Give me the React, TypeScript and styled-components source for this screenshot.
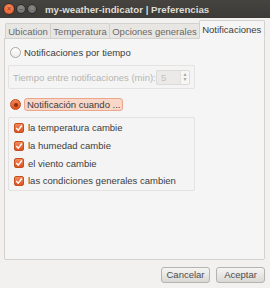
import { createGlobalStyle, styled } from "styled-components";

const GlobalStyle = createGlobalStyle`
  html, body {
    margin: 0;
    padding: 0;
    background: #f2f1f0;
  }
  body {
    font-family: "Liberation Sans", "DejaVu Sans", sans-serif;
    font-size: 9.5px;
    color: #3c3c3c;
  }
`;

const checks = [
  "la temperatura cambie",
  "la humedad cambie",
  "el viento cambie",
  "las condiciones generales cambien",
];

const tabs = ["Ubication", "Temperatura", "Opciones generales", "Notificaciones"];

function CheckMark() {
  return (
    <svg width="8" height="8" viewBox="0 0 8 8">
      <path d="M1.2 4.1 L3.2 6.2 L6.9 1.5" stroke="#fff" strokeWidth="1.4" fill="none" />
    </svg>
  );
}

export default function App() {
  return (
    <Window>
      <GlobalStyle />
      <TitleBar>
        <WinButtons>
          <WinButton $close>×</WinButton>
          <WinButton>–</WinButton>
          <WinButton>□</WinButton>
        </WinButtons>
        <Title>my-weather-indicator | Preferencias</Title>
      </TitleBar>
      <Body>
        <Notebook>
          <TabRow>
            {tabs.map((t, i) => (
              <Tab key={t} $active={i === tabs.length - 1}>
                {t}
              </Tab>
            ))}
          </TabRow>
          <Page>
            <RadioRow>
              <Radio />
              <span>Notificaciones por tiempo</span>
            </RadioRow>
            <Frame>
              <SpinLine>
                <DimLabel>Tiempo entre notificaciones (min):</DimLabel>
                <Spin>
                  <SpinValue>5</SpinValue>
                  <SpinArrows>
                    <span>▴</span>
                    <span>▾</span>
                  </SpinArrows>
                </Spin>
              </SpinLine>
            </Frame>
            <RadioRow $gapTop>
              <Radio $checked />
              <Focused>Notificación cuando ...</Focused>
            </RadioRow>
            <Frame>
              <CheckList>
                {checks.map((c) => (
                  <CheckRow key={c}>
                    <Check>
                      <CheckMark />
                    </Check>
                    <span>{c}</span>
                  </CheckRow>
                ))}
              </CheckList>
            </Frame>
          </Page>
        </Notebook>
        <ButtonRow>
          <Button>Cancelar</Button>
          <Button>Aceptar</Button>
        </ButtonRow>
      </Body>
    </Window>
  );
}

const Window = styled.div`
  width: 270px;
  height: 288px;
  display: flex;
  flex-direction: column;
  background: #f2f1f0;
  overflow: hidden;
`;

const TitleBar = styled.div`
  height: 18px;
  flex-shrink: 0;
  display: flex;
  align-items: center;
  background: linear-gradient(#45443f, #3c3b37);
  padding-left: 3px;
  gap: 8px;
`;

const WinButtons = styled.div`
  display: flex;
  align-items: center;
  gap: 1px;
`;

const WinButton = styled.div<{ $close?: boolean }>`
  width: ${(p) => (p.$close ? "12px" : "10px")};
  height: ${(p) => (p.$close ? "12px" : "10px")};
  border-radius: 50%;
  box-sizing: border-box;
  font-size: 7px;
  font-weight: bold;
  line-height: ${(p) => (p.$close ? "10px" : "8px")};
  text-align: center;
  color: ${(p) => (p.$close ? "#a83a12" : "#5a5955")};
  background: ${(p) =>
    p.$close
      ? "radial-gradient(circle at 50% 35%, #f88a5e, #e5521f)"
      : "radial-gradient(circle at 50% 35%, #8e8d89, #676662)"};
  border: 1px solid #2e2d2a;
  overflow: hidden;
`;

const Title = styled.div`
  color: #dfdbd2;
  font-weight: bold;
  font-size: 9.7px;
  white-space: nowrap;
`;

const Body = styled.div`
  flex: 1;
  display: flex;
  flex-direction: column;
  padding: 3px 5px 5px 4px;
`;

const Notebook = styled.div`
  display: flex;
  flex-direction: column;
  height: 239px;
`;

const TabRow = styled.div`
  display: flex;
  align-items: flex-end;
  height: 17px;
  padding-left: 1px;
  position: relative;
  z-index: 1;
`;

const Tab = styled.div<{ $active?: boolean }>`
  height: ${(p) => (p.$active ? "17px" : "14px")};
  line-height: ${(p) => (p.$active ? "17px" : "15px")};
  padding: 0 2.25px;
  border: 1px solid #d3d1cd;
  border-bottom: ${(p) => (p.$active ? "1px solid #f5f5f5" : "none")};
  border-radius: 2px 2px 0 0;
  margin-right: ${(p) => (p.$active ? "0" : "-1px")};
  margin-bottom: ${(p) => (p.$active ? "-1px" : "0")};
  background: ${(p) => (p.$active ? "#f5f5f5" : "#e8e6e3")};
  color: ${(p) => (p.$active ? "#3c3c3c" : "#6a6a68")};
  white-space: nowrap;
`;

const Page = styled.div`
  flex: 1;
  border: 1px solid #d3d1cd;
  border-radius: 0 0 2px 2px;
  background: #f5f5f5;
  padding: 5px 0 0 3px;
  display: flex;
  flex-direction: column;
  align-items: flex-start;
`;

const RadioRow = styled.div<{ $gapTop?: boolean }>`
  display: flex;
  align-items: center;
  gap: 2px;
  height: 17px;
  padding-left: 2px;
  margin-top: ${(p) => (p.$gapTop ? "3px" : "0")};
`;

const Radio = styled.div<{ $checked?: boolean }>`
  width: 11px;
  height: 11px;
  border-radius: 50%;
  box-sizing: border-box;
  border: 1px solid ${(p) => (p.$checked ? "#c04d1d" : "#a9a7a3")};
  background: ${(p) =>
    p.$checked ? "linear-gradient(#f38456, #e0531f)" : "linear-gradient(#ffffff, #ececec)"};
  display: flex;
  align-items: center;
  justify-content: center;
  margin-right: 1px;
  &::after {
    content: "";
    display: ${(p) => (p.$checked ? "block" : "none")};
    width: 4px;
    height: 4px;
    border-radius: 50%;
    background: #8f2f0c;
  }
`;

const Focused = styled.span`
  background: #f8d6c8;
  border: 1px solid #eba78c;
  border-radius: 3px;
  padding: 0 2px;
  line-height: 11px;
`;

const Frame = styled.div`
  width: 187px;
  box-sizing: border-box;
  border: 1px solid #e4e3e1;
  border-radius: 2px;
  margin: 4px 0 4px 0;
  background: #f4f4f4;
`;

const SpinLine = styled.div`
  display: flex;
  align-items: center;
  justify-content: space-between;
  height: 22px;
  padding: 0 4px 0 4px;
`;

const DimLabel = styled.span`
  color: #b5b4b0;
  white-space: nowrap;
`;

const Spin = styled.div`
  width: 34px;
  height: 15px;
  box-sizing: border-box;
  border: 1px solid #dddbd7;
  border-radius: 2px;
  display: flex;
  background: #ebeae8;
  overflow: hidden;
`;

const SpinValue = styled.div`
  flex: 1;
  color: #c2c1bd;
  padding-left: 4px;
  line-height: 13px;
`;

const SpinArrows = styled.div`
  width: 8px;
  display: flex;
  flex-direction: column;
  align-items: center;
  justify-content: center;
  font-size: 6px;
  line-height: 5px;
  color: #a9a8a4;
  background: #f7f7f6;
  border-left: 1px solid #e2e1de;
`;

const CheckList = styled.div`
  display: flex;
  flex-direction: column;
  padding: 1px 0 0 5px;
`;

const CheckRow = styled.div`
  display: flex;
  align-items: center;
  gap: 4px;
  height: 17.7px;
`;

const Check = styled.div`
  width: 10px;
  height: 10px;
  border-radius: 2px;
  background: linear-gradient(#f28a5e, #df5120);
  border: 1px solid #c4501f;
  box-sizing: border-box;
  display: flex;
  align-items: center;
  justify-content: center;
`;

const ButtonRow = styled.div`
  display: flex;
  justify-content: flex-end;
  gap: 6px;
  margin-top: 7px;
`;

const Button = styled.div`
  width: 49px;
  height: 16px;
  box-sizing: border-box;
  line-height: 14px;
  text-align: center;
  border: 1px solid #b5b3af;
  border-radius: 3px;
  background: linear-gradient(#f5f5f4, #dad8d4);
  color: #4c4c4c;
`;
